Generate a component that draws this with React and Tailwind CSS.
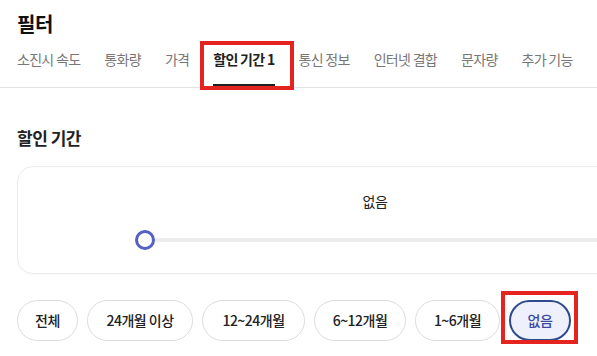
import React from "react";

const tabs = ["소진시 속도", "통화량", "가격", "할인 기간 1", "통신 정보", "인터넷 결합", "문자량", "추가 기능"];
const pills = [
  { label: "전체", w: "w-[61px]" },
  { label: "24개월 이상", w: "w-[106px]" },
  { label: "12~24개월", w: "w-[103px]" },
  { label: "6~12개월", w: "w-[92px]" },
  { label: "1~6개월", w: "w-[85px]" },
];

export default function App() {
  return (
    <div
      className="w-[597px] h-[356px] overflow-hidden bg-white text-[#222]"
      style={{ fontFamily: '"Noto Sans CJK KR", "Noto Sans", sans-serif' }}
    >
      <div className="px-[17px] pt-[10px] text-[20px] font-bold leading-[28px] text-[#111] tracking-[-0.5px]">필터</div>

      <div className="flex gap-[24px] px-[17px] border-b border-[#e3e3e3] w-[760px]">
        {tabs.map((t, i) => {
          const active = i === 3;
          return (
            <div
              key={t}
              className={
                "relative shrink-0 h-[49px] pt-[11px] text-[14px] leading-[20px] tracking-[-0.7px] border-b-[3px] " +
                (active ? "border-[#222] text-[#222] font-semibold" : "border-transparent text-[#777]")
              }
            >
              {t}
              {active && (
                <div className="absolute left-[-13px] right-[-19px] top-[3px] bottom-[-6px] border-4 border-[#e52420]" />
              )}
            </div>
          );
        })}
      </div>

      <div className="px-[17px] pt-[38px] text-[17px] font-bold leading-[24px] text-[#222] tracking-[-0.5px]">할인 기간</div>

      <div className="pl-[17px] mt-[16px]">
        <div className="w-[716px] h-[108px] rounded-[16px] border border-[#ececec] bg-white shadow-[0_1px_3px_rgba(0,0,0,0.03)] pt-[24px]">
          <div className="text-center text-[14px] leading-[20px] text-[#222] tracking-[-0.5px]">없음</div>
          <div className="mt-[19px] mx-[117px] flex items-center h-[20px]">
            <div className="w-[20px] h-[20px] rounded-full border-[3px] border-[#5561c2] bg-white shrink-0" />
            <div className="flex-1 h-[4px] bg-[#ededf0] rounded-full" />
          </div>
        </div>
      </div>

      <div className="flex gap-[9px] px-[17px] mt-[26px]">
        {pills.map((p) => (
          <div
            key={p.label}
            className={
              "h-[41px] shrink-0 rounded-full border border-[#dcdcdf] flex items-center justify-center text-[14px] font-medium tracking-[-0.5px] text-[#222] " +
              p.w
            }
          >
            {p.label}
          </div>
        ))}
        <div className="relative shrink-0 w-[62px] h-[41px] rounded-full border-2 border-[#2d4b8e] bg-[#eef0fc] flex items-center justify-center text-[14px] font-medium tracking-[-0.5px] text-[#3b4aa5]">
          없음
          <div className="absolute left-[-10px] right-[-9px] top-[-11px] bottom-[-5px] border-4 border-[#e52420]" />
        </div>
      </div>
    </div>
  );
}
